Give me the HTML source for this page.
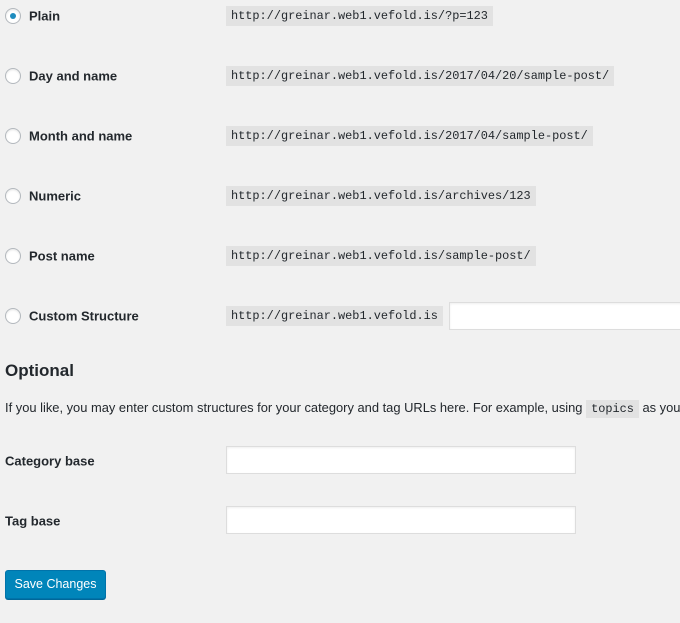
<!DOCTYPE html>
<html><head><style>
body{margin:0;width:680px;height:623px;background:#f1f1f1;font-family:"Liberation Sans",sans-serif;color:#23282d;position:relative;overflow:hidden}
.a{position:absolute;white-space:nowrap}
.r{width:14px;height:14px;border:1px solid #b4b9be;border-radius:50%;background:#fff;box-shadow:inset 0 1px 2px rgba(0,0,0,.1)}
.r i{position:absolute;left:4px;top:4px;width:6px;height:6px;border-radius:50%;background:#1e8cbe}
.l{font-size:13px;left:29px;transform:translateY(-50%);font-weight:600}
.c{font-family:"Liberation Mono",monospace;font-size:11.9px;background:#e2e2e2;left:226px;height:20px;line-height:20px;padding:0 5px;color:#23282d}
.in{background:#fff;border:1px solid #ddd;box-shadow:inset 0 1px 2px rgba(0,0,0,.07)}
</style></head><body>
<div class="a r" style="left:5px;top:8px"><i></i></div><div class="a l" style="top:16px">Plain</div><div class="a c" style="top:6px">http://greinar.web1.vefold.is/?p=123</div>
<div class="a r" style="left:5px;top:68px"></div><div class="a l" style="top:76px">Day and name</div><div class="a c" style="top:66px">http://greinar.web1.vefold.is/2017/04/20/sample-post/</div>
<div class="a r" style="left:5px;top:128px"></div><div class="a l" style="top:136px">Month and name</div><div class="a c" style="top:126px">http://greinar.web1.vefold.is/2017/04/sample-post/</div>
<div class="a r" style="left:5px;top:188px"></div><div class="a l" style="top:196px">Numeric</div><div class="a c" style="top:186px">http://greinar.web1.vefold.is/archives/123</div>
<div class="a r" style="left:5px;top:248px"></div><div class="a l" style="top:256px">Post name</div><div class="a c" style="top:246px">http://greinar.web1.vefold.is/sample-post/</div>
<div class="a r" style="left:5px;top:308px"></div><div class="a l" style="top:316px">Custom Structure</div><div class="a c" style="top:306px">http://greinar.web1.vefold.is</div>
<div class="a in" style="left:449px;top:302px;width:240px;height:26px"></div>
<div class="a" style="left:5px;top:361px;font-size:17px;font-weight:600">Optional</div>
<div class="a" style="left:5px;top:400px;font-size:12.9px">If you like, you may enter custom structures for your category and tag URLs here. For example, using <span style="font-family:'Liberation Mono',monospace;background:#e2e2e2;padding:2px 5px;font-size:11.9px">topics</span> as your</div>
<div class="a l" style="left:5px;top:461px">Category base</div>
<div class="a in" style="left:226px;top:446px;width:348px;height:26px"></div>
<div class="a l" style="left:5px;top:521px">Tag base</div>
<div class="a in" style="left:226px;top:506px;width:348px;height:26px"></div>
<div class="a" style="left:5px;top:570px;width:99px;height:27px;background:#0085ba;border:1px solid #0073aa;border-radius:3px;box-shadow:0 1px 0 #006799;color:#fff;font-size:12.5px;line-height:27px;text-align:center">Save Changes</div>
</body></html>
